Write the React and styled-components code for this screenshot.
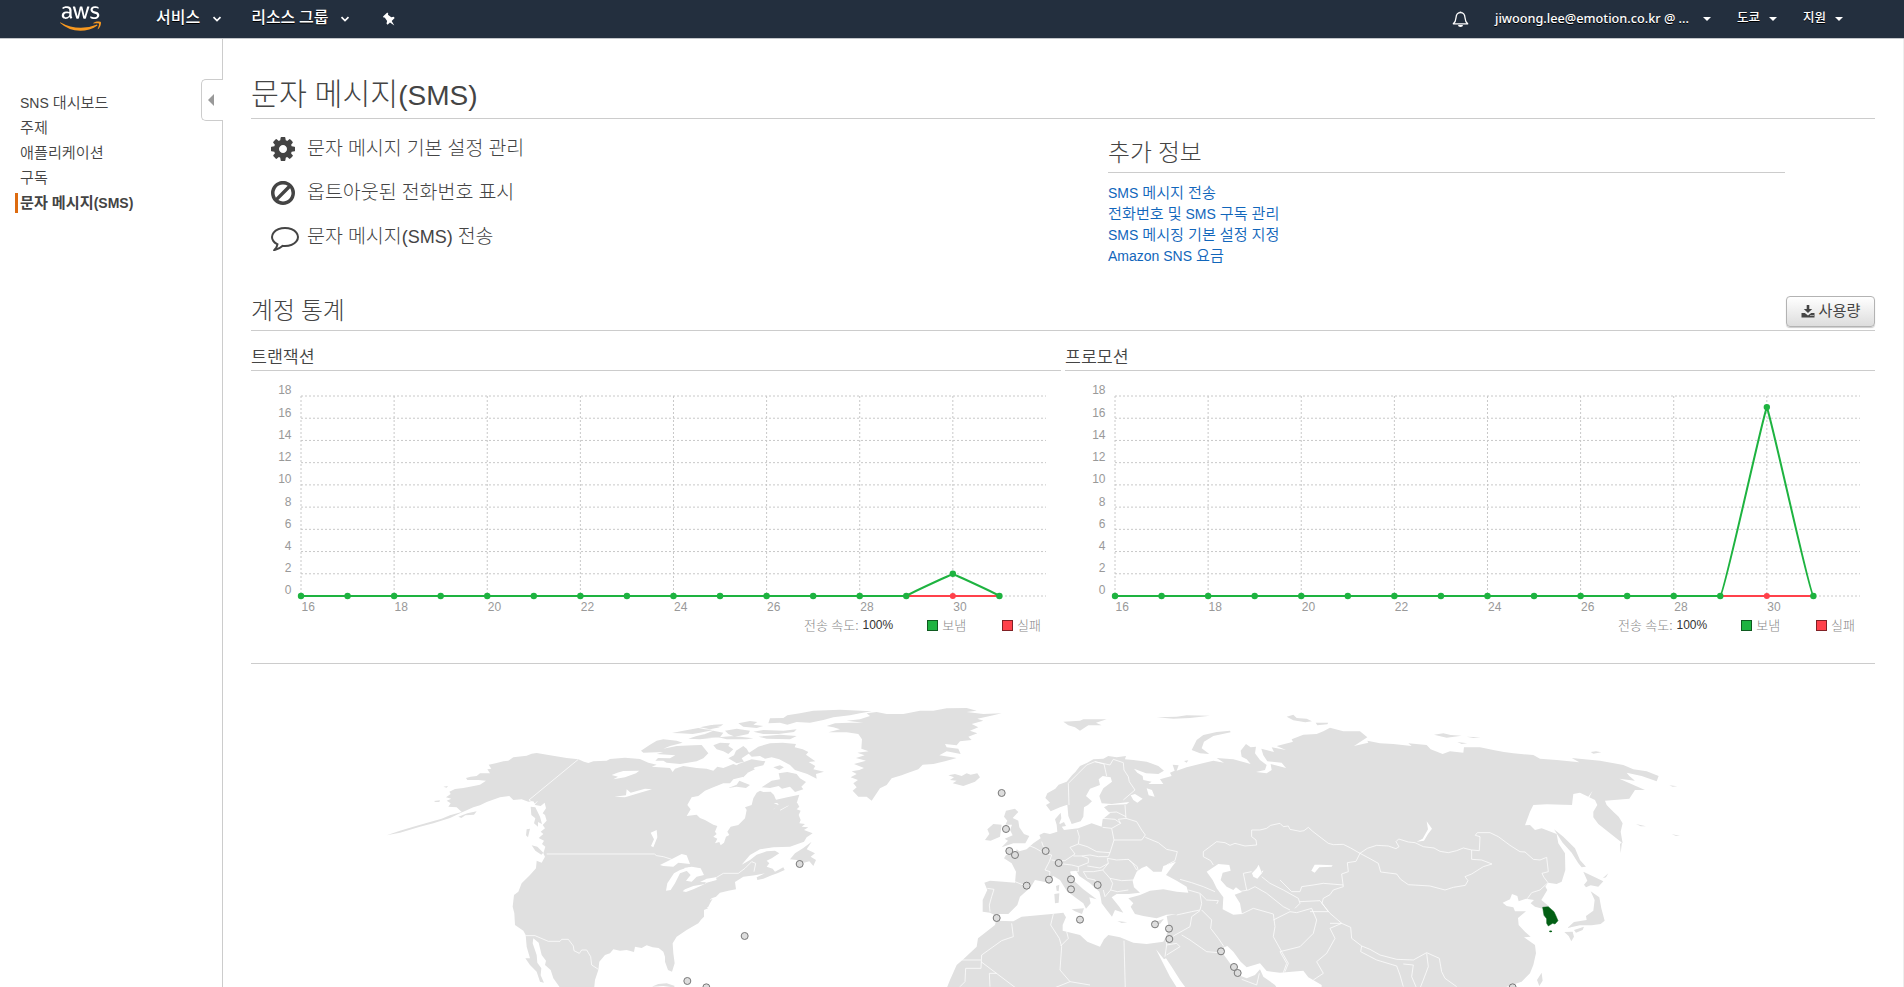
import React from "react";
import styled, { createGlobalStyle } from "styled-components";
import { FaAws } from "react-icons/fa";

const GlobalStyle = createGlobalStyle`
  *, *::before { box-sizing: border-box; }
  html, body { margin: 0; padding: 0; background: #fff; overflow: hidden; }
  body {
    font-family: "Liberation Sans", "Noto Sans CJK KR", sans-serif;
    color: #444;
    font-size: 14px;
  }
`;

/* ---------- text ---------- */

const Hangul = styled.span`
  font-family: "Noto Sans CJK KR", sans-serif;
  font-size: 1.083em;
  font-weight: ${(p) => p.$weight || "inherit"};
  line-height: 1;
`;

function Label({ children, weight = 350 }) {
  return (
    <span>
      {children
        .split(/([\uac00-\ud7a3]+)/)
        .filter(Boolean)
        .map((part, i) =>
          /[\uac00-\ud7a3]/.test(part) ? (
            <Hangul key={i} $weight={weight}>
              {part}
            </Hangul>
          ) : (
            part
          )
        )}
    </span>
  );
}

/* ---------- shell ---------- */

const Page = styled.div`
  width: 1904px;
  height: 987px;
  display: flex;
  flex-direction: column;
  overflow: hidden;
`;

const TopBar = styled.header`
  height: 39px;
  flex: none;
  background: #232f3e;
  border-bottom: 1px solid #c3c6ca;
  display: flex;
  align-items: center;
  justify-content: space-between;
  color: #fff;
  text-shadow: 0 1px 0 #000;
`;

const NavGroup = styled.nav`
  display: flex;
  align-items: center;
  height: 38px;
  padding: ${(p) => (p.$end ? "0 61px 0 0" : "0 0 0 60px")};
`;

const Logo = styled.div`
  width: 41px;
  height: 33px;
  margin-right: 55px;
  display: flex;
  align-items: center;
  padding-bottom: 1px;
  > svg { width: 41px; height: 33px; display: block; }
`;

const NavItem = styled.div`
  display: flex;
  align-items: center;
  font-family: "Noto Sans CJK KR", sans-serif;
  font-size: 16px;
  font-weight: 500;
  line-height: 20px;
  white-space: nowrap;
  margin-right: ${(p) => p.$gap}px;
  padding-bottom: 6px;
  > svg { margin: 7px 0 0 ${(p) => p.$inner}px; }
`;

const AccountItem = styled.div`
  display: flex;
  align-items: center;
  font-family: "Noto Sans", "Noto Sans CJK KR", sans-serif;
  font-size: ${(p) => p.$size || 12}px;
  font-weight: 500;
  line-height: 16px;
  white-space: nowrap;
  margin-left: ${(p) => p.$gap}px;
  padding-bottom: 2px;
`;

const Caret = styled.i`
  width: 0;
  height: 0;
  margin: 2px 0 0 ${(p) => p.$gap}px;
  border: 4px solid transparent;
  border-top-color: #fff;
  border-bottom: 0;
`;

const Body = styled.div`
  display: flex;
  flex: 1;
  min-height: 0;
  border-right: 1px solid #eee;
`;

const Sidebar = styled.aside`
  position: relative;
  width: 223px;
  flex: none;
  border-right: 1px solid #ccc;
  padding: 52px 0 0 15px;
`;

const SideLink = styled.div`
  height: 25px;
  display: flex;
  align-items: center;
  padding-bottom: 1px;
  color: #444;
`;

const SideInner = styled.div`
  height: 20px;
  line-height: 20px;
  padding-left: 2px;
  border-left: 3px solid ${(p) => (p.$active ? "#dd6b10" : "transparent")};
  font-weight: ${(p) => (p.$active ? 700 : 400)};
  white-space: nowrap;
`;

const Collapse = styled.button`
  position: absolute;
  top: 40px;
  right: -1px;
  width: 22px;
  height: 42px;
  padding: 0 0 0 6px;
  background: #fff;
  border: 1px solid #ccc;
  border-right: 0;
  border-radius: 5px 0 0 5px;
  display: flex;
  align-items: center;
  &::before {
    content: "";
    border: 6px solid transparent;
    border-right-color: #999;
    border-left: 0;
  }
`;

const Main = styled.main`
  flex: 1;
  padding: 0 28px;
  min-width: 0;
`;

const Title = styled.h1`
  margin: 0;
  height: 80px;
  padding-top: 38px;
  line-height: 36px;
  border-bottom: 1px solid #ccc;
  font-size: 28px;
  font-weight: 400;
`;

const Intro = styled.section`
  display: flex;
  justify-content: space-between;
  height: 167px;
  padding: 8px 90px 0 20px;
`;

const Actions = styled.div`
  display: flex;
  flex-direction: column;
`;

const Action = styled.div`
  display: flex;
  align-items: center;
  height: 44px;
  font-size: 18px;
  svg { display: block; fill: #444; }
`;

const ActionIcon = styled.span`
  width: 36px;
  padding-bottom: 1px;
`;

const ActionText = styled.span`
  line-height: 24px;
`;

const More = styled.div`
  width: 677px;
  padding-top: 11px;
`;

const MoreTitle = styled.h2`
  margin: 0 0 10px;
  height: 35px;
  padding-top: 1px;
  line-height: 28px;
  border-bottom: 1px solid #ccc;
  font-size: 22px;
  font-weight: 400;
`;

const MoreLink = styled.a`
  display: block;
  height: 21px;
  line-height: 21px;
  color: #1166bb;
`;

const StatsHead = styled.div`
  height: 45px;
  border-bottom: 1px solid #ccc;
  display: flex;
  justify-content: space-between;
`;

const StatsTitle = styled.h2`
  margin: 0;
  padding-top: 11px;
  font-size: 22px;
  line-height: 30px;
  font-weight: 400;
`;

const UsageButton = styled.button`
  margin-top: 10px;
  width: 89px;
  height: 31px;
  display: flex;
  align-items: center;
  justify-content: center;
  gap: 4px;
  padding: 0 0 3px;
  border: 1px solid #b3b3b3;
  border-radius: 4px;
  background: linear-gradient(#fff, #ddd);
  box-shadow: 0 1px 1px rgba(0, 0, 0, 0.2);
  color: #444;
  font: 500 14px "Liberation Sans", "Noto Sans CJK KR", sans-serif;
  svg { display: block; margin-top: 2px; }
`;

const Charts = styled.div`
  display: flex;
  gap: 4px;
  height: 332px;
`;

const Panel = styled.section`
  width: 810px;
`;

const PanelTitle = styled.h3`
  margin: 0;
  height: 40px;
  padding-top: 15px;
  line-height: 24px;
  font-size: 16px;
  font-weight: 400;
  border-bottom: 1px solid #ccc;
`;

const Plot = styled.svg`
  display: block;
  text { font-family: "Liberation Sans", sans-serif; font-size: 12px; fill: #999; }
`;

const Legend = styled.div`
  display: flex;
  justify-content: flex-end;
  align-items: center;
  height: 18px;
  padding-right: 20px;
  font-size: 12px;
  color: #888;
  b { font-weight: 400; color: #333; margin-left: 4px; }
`;

const Key = styled.span`
  display: flex;
  align-items: center;
  margin-left: ${(p) => p.$gap}px;
  &::before {
    content: "";
    width: 11px;
    height: 11px;
    margin: 0 4px 0 0;
    background: ${(p) => p.$fill};
    border: 1px solid ${(p) => p.$edge};
  }
`;

const MapFrame = styled.div`
  border-top: 1px solid #ccc;
  svg { display: block; }
`;

/* ---------- icons ---------- */

const Chevron = () => (
  <svg width="10" height="7" viewBox="0 0 10 7">
    <path d="M1.500 1.200 5 4.600 8.500 1.200" fill="none" stroke="#fff" strokeWidth="1.700" />
  </svg>
);

const Pin = () => (
  <svg width="14" height="15" viewBox="0 0 14 15">
    <path d="M1 4.600 5.300.6l1 1.200-.4 1L9.300 5.300l2.300-.5 1.100 1.200-3 3 2.600 4.600-4.300-3.200-2.500 2.300-1-1.100.6-2.500L2.700 5.400l-.9.3z" fill="#fff" />
  </svg>
);

const Bell = () => (
  <svg width="17" height="18" viewBox="0 0 17 18">
    <path d="M1.300 13.800c2-1.500 2.500-3 2.700-6C4.200 4.500 5.700 2.700 8.500 2.700s4.300 1.800 4.500 5.100c.2 3 .7 4.500 2.700 6z" fill="none" stroke="#fff" strokeWidth="1.300" strokeLinejoin="round" />
    <path d="M7.300 2.600a1.200 1.200 0 0 1 2.400 0M6 15h5a2.500 2 0 0 1-5 0z" fill="#fff" />
  </svg>
);

const Gear = () => (
  <svg width="24" height="24" viewBox="0 128 1536 1536">
    <path d="M1024 896q0-106-75-181t-181-75-181 75-75 181 75 181 181 75 181-75 75-181zm512-109v222q0 12-8 23t-20 13l-185 28q-19 54-39 91 35 50 107 138 10 12 10 25t-9 23q-27 37-99 108t-94 71q-12 0-26-9l-138-108q-44 23-91 38-16 136-29 186-7 28-36 28h-222q-14 0-24.500-8.500t-11.500-21.500l-28-184q-49-16-90-37l-141 107q-10 9-25 9-14 0-25-11-126-114-165-168-7-10-7-23 0-12 8-23 15-21 51-66.500t54-70.500q-27-50-41-99l-183-27q-13-2-21-12.500t-8-23.500v-222q0-12 8-23t19-13l186-28q14-46 39-92-40-57-107-138-10-12-10-24 0-10 9-23 26-36 98.500-107.500t94.500-71.500q13 0 26 10l138 107q44-23 91-38 16-136 29-186 7-28 36-28h222q14 0 24.500 8.500t11.500 21.500l28 184q49 16 90 37l142-107q9-9 24-9 13 0 25 10 129 119 165 170 7 8 7 22 0 12-8 23-15 21-51 66.500t-54 70.500q26 50 41 98l183 28q13 2 21 12.500t8 23.500z" />
  </svg>
);

const Ban = () => (
  <svg width="24" height="24" viewBox="0 128 1536 1536">
    <path d="M1312 893q0-161-87-295l-754 753q137 89 297 89 111 0 211.500-43.500t173.500-116.500 116-174.500 43-212.500zm-999 299l755-754q-135-91-300-91-148 0-273 73t-198 199-73 274q0 162 89 299zm1223-299q0 157-61 300t-163.500 246-245 164-298.500 61-298.500-61-245-164-163.500-246-61-300 61-299.500 163.500-245.500 245-164 298.500-61 298.500 61 245 164 163.500 245.500 61 299.500z" />
  </svg>
);

const Comment = () => (
  <svg width="28" height="28" viewBox="0 0 1792 1792">
    <path d="M896 384q-204 0-381.500 69.500t-282 187.500-104.500 255q0 112 71.500 213.500t201.500 175.500l87 50-27 96q-24 91-70 172 152-63 275-171l43-38 57 6q69 8 130 8 204 0 381.500-69.500t282-187.500 104.500-255-104.500-255-282-187.500-381.500-69.500zm896 512q0 174-120 321.500t-326 233-450 85.500q-70 0-145-8-198 175-460 242-49 14-114 22h-5q-15 0-27-10.500t-16-27.500v-1q-3-4-.5-12t2-10 4.500-9.500l6-9 7-8.500 8-9q7-8 31-34.500t34.500-38 31-39.500 32.500-51 27-59 26-76q-157-89-247.500-220t-90.500-281q0-174 120-321.500t326-233 450-85.500 450 85.500 326 233 120 321.500z" />
  </svg>
);

const Download = () => (
  <svg width="14" height="13" viewBox="0 0 14 13">
    <path d="M5.700 0h2.600v4h2.900L7 8 2.800 4h2.900zM.5 8h3.300L7 10.600 10.200 8h3.300v4.500H.5z" fill="#444" />
    <path d="M9.500 10.500h1M11.500 10.500h1" stroke="#fff" />
  </svg>
);

/* ---------- charts ---------- */

const GREEN = "#1eb340";
const RED = "#ff414b";
const LEFT = 50;
const BASE = 225;
const DAY = 46.56;
const UNIT = 200 / 18;

function LineChart({ peak }) {
  const x = (d) => LEFT + (d - 16) * DAY;
  const y = (v) => BASE - v * UNIT;
  const days = Array.from({ length: 16 }, (_, i) => 16 + i);
  const top = y(peak);
  const sway = peak > 5 ? 2 : 0;
  const line =
    `M${x(16)} ${BASE}H${x(29)}` +
    `C${x(29) + 2 + sway} ${BASE - 2} ${x(30) - 4 - sway} ${top + (BASE - top) * 0.09} ${x(30)} ${top}` +
    `C${x(30) + 4 + sway} ${top + (BASE - top) * 0.09} ${x(31) - 2 - sway} ${BASE - 2} ${x(31)} ${BASE}`;
  return (
    <Plot width="810" height="245" viewBox="0 0 810 245">
      <g stroke="#c8c8c8" strokeDasharray="2 2">
        {Array.from({ length: 10 }, (_, i) => (
          <path key={i} d={`M${LEFT} ${y(i * 2)}H${LEFT + 745}`} />
        ))}
        {Array.from({ length: 8 }, (_, i) => (
          <path key={i} d={`M${x(16 + i * 2)} ${BASE - 200}V${BASE}`} />
        ))}
      </g>
      {Array.from({ length: 10 }, (_, i) => (
        <text key={i} x="40.500" y={y(i * 2) - 1.6} textAnchor="end">
          {i * 2}
        </text>
      ))}
      {Array.from({ length: 8 }, (_, i) => (
        <text key={i} x={x(16 + i * 2) + 0.5} y={BASE + 15}>
          {16 + i * 2}
        </text>
      ))}
      <path d={`M${x(16)} ${BASE}H${x(31)}`} stroke={RED} strokeWidth="2" />
      <circle cx={x(30)} cy={BASE} r="3" fill={RED} />
      <path d={line} fill="none" stroke={GREEN} strokeWidth="2" />
      {days.map((d) => (
        <circle key={d} cx={x(d)} cy={d === 30 ? top : BASE} r="3.200" fill={GREEN} />
      ))}
    </Plot>
  );
}

function StatPanel({ title, peak }) {
  return (
    <Panel>
      <PanelTitle>
        <Label>{title}</Label>
      </PanelTitle>
      <LineChart peak={peak} />
      <Legend>
        <Label weight={300}>전송 속도:</Label>
        <b>100%</b>
        <Key $gap={34} $fill={GREEN} $edge="#0f5a20">
          <Label weight={300}>보냄</Label>
        </Key>
        <Key $gap={36} $fill={RED} $edge="#802126">
          <Label weight={300}>실패</Label>
        </Key>
      </Legend>
    </Panel>
  );
}

/* ---------- world map ---------- */

/* Coordinates are thirds of a pixel; each sheet starts at its own longitude. */
const SHEET = { a: 0, b: 960, c: 1860, d: 2700 };

function outline(...runs) {
  const pts = [];
  runs.forEach((run) => {
    const [sheet, ...pairs] = run.trim().split(/\s+/);
    pairs.forEach((p) => {
      const [px, py] = p.split(",").map(Number);
      pts.push(`${px + SHEET[sheet]} ${py}`);
    });
  });
  return pts.join("L");
}

const LAND = [
  outline(
    "a 20,436 60,422 100,410 150,396 185,386 210,376 245,366 230,352 205,350 212,340 200,332 214,326 198,322 212,312 208,305 225,297 250,294 270,290 300,284 318,272 295,270 262,270 258,264 272,260 290,258 300,250 330,250 322,238 334,236 326,224 350,219 370,214 385,212 400,202 440,197 455,191 470,189 510,196 560,204 595,208 612,215 625,219 640,214 680,212 690,207 735,203 780,207 805,218 830,224 815,230 870,234 878,246 885,236 910,228 950,234 980,236 1000,242 1012,230 1030,234 1060,222 1085,232 1110,228 1125,238 1100,250 1085,262 1060,268 1050,280 1030,280 1000,292 975,302 955,318 935,322 922,345 932,358 920,378 950,374 960,384 975,390 1000,404 1012,408 1005,425 1010,432 1000,440 1012,446 1005,460 1018,456 1022,466 1032,458 1038,440 1048,435 1042,425 1052,410 1075,405 1095,385 1100,360 1095,352 1115,345 1120,325 1130,308",
    "b 180,302 190,306 212,305 222,315 228,330 240,332 222,340 235,345 220,358 245,350 240,362 270,345 290,335 298,350 290,358 302,362 296,375 302,390 298,400 315,402 305,410 325,412 312,420 338,430 320,442 312,455 270,470 220,472 180,478 150,495 125,524 150,510 170,494 200,484 225,482 238,490 215,505 200,512 208,520 200,530 218,536 225,545 250,532 254,540 232,550 215,556 190,566 172,570 170,562 195,550 165,556 130,560 105,576 108,598 85,602 60,608 48,620 35,625 20,640 24,655 12,660 12,680 0,692",
    "a 962,680 968,660 972,640 998,626 990,640 985,650 972,660 970,680 955,700 920,720 890,740 878,760 880,790 884,820 876,845 864,840 855,815 855,800 850,785 836,774 818,772 800,766 785,774 765,770 762,786 740,780 720,782 700,778 690,790 675,795 658,815 655,840 645,870 642,900 545,900 520,865 512,840 495,825 498,812 485,795 476,758 460,745 458,760 470,795 472,818 484,835 482,856 492,878 480,875 470,845 450,825 436,805 450,805 440,770 437,735 430,722 405,705 403,670 398,650 402,615 415,605 425,580 450,555 468,535 470,512 485,518 495,500 490,490 496,470 486,462 492,452 476,444 490,432 482,425 495,415 488,405 500,392 495,375 488,370 498,355 494,338 482,348 466,345 460,334 445,335 425,328 400,330 388,318 360,322 320,336 300,346 280,352 240,370 210,384 160,400 120,410 60,428"
  ),
  outline("a 455,466 472,470 490,488 484,494 466,482"),
  outline("a 452,350 466,352 480,380 486,402 474,396 474,410 462,400 466,385 454,375"),
  outline("a 440,418 450,416 444,442 438,436"),
  outline("a 235,380 262,370 290,364 282,374 256,376 244,384"),
  outline("a 162,333 180,331 178,336 166,336"),
  outline("a 190,290 204,288 200,293"),
  outline("a 783,182 810,164 830,152 850,148 890,152 908,158 870,168 850,176 890,168 940,166 965,165 985,190 970,205 950,214 900,222 860,218 850,212 826,212 834,204 870,205 886,196 830,192 850,186 790,188"),
  outline("a 876,129 910,122 955,114 975,118 1000,120 960,128 938,132 900,130"),
  outline("a 980,112 1000,104 1030,103 1022,109 995,114"),
  outline("a 925,146 950,138 985,130 1005,126 1010,138 995,144 960,148"),
  outline("a 1015,142 1060,138 1080,140 1120,145 1100,148 1040,148"),
  outline("a 1000,166 1020,158 1050,160 1045,168 1060,178 1045,192 1030,184 1010,178"),
  outline("a 1068,182 1090,168 1100,176 1108,190 1085,205 1092,215 1070,220 1045,205 1062,196"),
  outline("b 300,70 340,62 420,59 515,64 480,70 450,76 400,82 370,90 330,98 290,96 262,104 240,98 205,100 210,85 250,84 262,76"),
  outline("b 160,125 190,120 250,122 290,118 282,126 235,132 190,132"),
  outline("b 175,140 240,134 290,138 270,148 200,146"),
  outline("b 115,100 150,93 172,96 160,104 190,108 170,114 130,110"),
  outline("b 75,122 110,116 150,122 145,132 105,140 85,132"),
  outline("b 15,132 40,122 70,128 60,142 20,144"),
  outline("b 0,112 30,106 60,112 30,118"),
  outline("b 145,190 175,170 210,160 248,158 288,162 284,172 308,178 325,186 318,194 346,214 326,216 346,228 340,238 372,245 348,252 350,266 322,252 285,240 270,225 238,208 215,202 195,206 180,198 155,200"),
  outline("b 185,292 215,272 240,268 236,250 262,246 290,252 300,265 318,276 304,290 310,298 285,306 270,290 246,296 236,288 210,294"),
  outline("b 85,294 110,284 118,272 150,285 138,294 110,290"),
  outline("b 90,262 105,252 90,246 98,236 115,222 155,208 196,214 190,226 165,232 152,240 130,262 110,256"),
  outline("b 220,232 240,226 252,232 238,240"),
  outline("b 225,330 262,322 298,314 290,340 262,348 240,360 222,356 236,344"),
  outline("b 270,508 285,490 310,474 335,455 320,478 345,490 332,500 348,510 340,528 328,514 312,518 290,510"),
  outline("a 815,890 835,882 860,880 885,888 880,892 850,888"),
  outline("b 380,108 405,100 450,98 490,98 440,92 480,88 510,78 500,70 530,66 560,72 610,72 660,62 700,62 740,55 800,54 830,62 800,66 850,72 905,70 870,78 832,86 850,92 815,102 835,112 810,122 832,130 805,140 815,150 780,154 770,166 735,162 740,172 775,176 782,192 740,184 718,196 770,204 735,214 700,222 668,224 655,238 625,248 605,256 575,265 560,285 540,295 530,310 515,332 500,320 475,320 458,302 470,292 460,280 474,270 452,262 470,252 455,244 478,240 492,234 462,222 498,212 468,204 494,196 472,188 506,184 484,176 486,148 475,132 440,127 385,127 420,118 400,112"),
  outline("b 745,256 762,262 750,270 770,272 758,280 790,288 825,275 840,262 832,250 812,254 800,250 785,258 765,252"),
  outline("b 918,362 945,356 955,366 938,384 955,392 958,412 972,432 988,438 976,460 940,460 905,472 924,452 914,446 938,436 930,420 936,404 916,404 922,392 912,380"),
  outline("b 855,450 868,432 862,418 880,402 905,404 900,440 872,452"),
  outline(
    "b 848,665 848,630 862,600 853,578 870,572 910,575 945,578 948,545 935,520 912,505 918,495 945,494 950,478 958,484 980,478 1000,460",
    "c 122,445 118,435 132,428 150,432 172,425 170,404 165,388 182,368 184,385 178,400 192,420 235,415 275,400 305,410 308,388 330,370 312,352 325,345 380,343 388,336 335,342 305,340 298,318 310,295 336,275 332,262 308,258 296,268 300,285 270,296 258,318 276,334 264,345 252,352 250,380 242,394 215,402 205,378 202,344 180,352 152,364 138,345 150,338 136,324 142,310 166,296 176,284 200,275 216,256 226,246 240,228 262,218 280,208 310,206 325,198 350,202 378,198 375,208 400,210 440,215 475,228 492,242 475,252 438,250 402,236 412,248 428,258 430,270 455,275 445,282 490,282 480,268 515,258 510,248 524,242 518,224 536,226 530,242 560,232 590,224 640,212 672,218 650,204 700,208 752,222 740,208 725,200 722,182 738,162 752,172 768,170 765,190 780,210 800,225 795,240 768,246 800,250 815,240 812,222 858,234 845,218 802,214 790,196 784,176 822,186 815,172 858,180 830,168 880,155",
    "d 40,158 35,148 70,134 110,132 130,124 150,113 190,124 240,124 262,142 222,168 265,158 262,152 300,160 340,162 395,168 385,160 440,165 452,178 488,192 510,184 550,188 552,172 600,172 640,180 672,186 700,190 760,195 780,206 830,210 898,217 875,204 960,212 1030,225 1060,238 1100,244 1136,258 1130,274 1085,258 1040,248 1048,258 1065,272 1018,266 1095,300 1065,300 1048,326 975,332 980,345 1000,365 1016,380 1028,400 1022,425 1028,460 990,430 955,402 940,382 940,365 952,345 945,330 928,322 938,302 925,320 900,308 880,312 876,345 800,343 760,345 750,365 735,406 750,405 765,420 785,415 830,432 835,460 855,490 856,540 845,575 830,582 804,578 796,590 802,600 784,630 806,648 788,656 765,650 752,640 762,630 738,626 716,634 712,618 696,612 690,628 668,638 680,648 700,652 705,664 738,664 714,684 716,705 735,725 752,740 732,742 765,765 768,790 760,825 750,850 725,875 680,890 676,900 125,900 125,885 85,862 70,842 0,848",
    "c 800,843 780,820 740,832 722,815 700,785 682,768 672,772 665,785 690,820 715,855 740,865 765,855 780,838 790,860 825,885 835,900 562,900 540,870 515,830 498,805 492,808 468,778 492,825 510,860 532,895 535,900",
    "b 738,900 750,870 770,825 790,808 830,770 834,745 885,705 888,692 940,694 965,680 1055,672 1090,668 1098,682",
    "c 188,705 188,722 240,735 262,755 300,770 312,748 325,735 360,742 400,758 440,762 490,755 500,735 505,705 500,678 530,672 500,674 470,685 430,678 405,672 392,650 400,640 385,625 420,615 450,602 490,598 530,605 565,608 560,590 530,572 498,555 520,525 528,515 490,528 485,545 460,545 440,528 425,534 410,545 398,572 402,592 420,608 385,612 350,612 335,622 358,650 370,668 345,660 336,680 320,660 305,640 302,622 298,605 270,580 238,558 228,542 210,545 222,572 250,598 290,628 268,622 272,640 258,656 250,640 225,622 200,602 180,570 160,558 135,576 105,570 92,592 60,620 52,645 25,672 0,672",
    "b 885,676 870,668"
  ),
  outline("c 180,402 192,396 198,408 185,410"),
  outline("c 215,658 252,655 246,672 225,664"),
  outline("c 163,612 178,610 176,638 165,640"),
  outline("c 168,588 178,584 176,604 170,602"),
  outline("c 352,693 382,697 365,699"),
  outline("c 462,702 472,694 492,686 480,702"),
  outline("c 190,95 240,92 250,88 320,88 288,98 305,106 265,106 240,122 225,112 205,106"),
  outline("c 575,180 590,150 610,135 650,126 690,122 692,127 640,138 612,155 605,175 628,192 600,190"),
  outline("c 470,82 530,80 560,76 630,77 570,84 520,86"),
  outline("d 20,80 40,74 50,84 80,86 96,94 76,97 40,91"),
  outline("d 107,98 145,98 142,103 112,106"),
  outline("d 462,134 490,130 512,135 545,137 500,143"),
  outline("d 560,140 602,142 580,144"),
  outline("d 532,156 562,160 545,162"),
  outline("d 932,186 948,184 964,187 940,191"),
  outline("c 552,213 565,211 560,218"),
  outline("d 822,418 850,440 885,475 900,510 918,530 905,532 895,520 875,488 848,458"),
  outline("d 910,545 945,562 970,574 955,590 932,586 918,592 912,584 922,572"),
  outline("d 932,604 958,622 964,655 974,692 962,702 935,706 900,706 862,714 882,696 920,690 918,678 940,662 944,630"),
  outline("d 853,726 878,725 882,740 874,754 866,738"),
  outline("d 882,720 912,710 908,720 888,728"),
  outline("d 785,848 788,872 778,888 771,870"),
  outline("d 1168,286 1192,289 1178,290"),
  outline("d 1068,402 1098,409 1082,409"),
  outline("d 1175,432 1200,438 1188,438"),
  outline("d 968,565 985,550 978,562"),
  outline("d 1020,462 1026,456 1022,490"),
];

const WATER = [
  outline("a 695,255 712,248 730,243 778,242 768,250 735,262 700,268 714,260"),
  outline("a 703,320 738,316 740,298 752,308 795,296 816,298 780,308 735,322"),
  outline("a 812,428 830,420 832,442 820,472 813,468 822,448"),
  outline("a 840,525 870,510 905,492 920,496 930,522 895,518 880,530 850,528"),
  outline("a 858,602 862,580 882,550 900,540 925,532 928,540 900,550 885,580 872,600"),
  outline("a 912,534 935,530 962,535 972,555 950,560 935,575 918,572 932,555"),
  outline("a 908,604 915,598 940,588 975,582 940,598 918,606"),
  outline("a 960,576 980,566 1008,562 1010,570 985,577"),
  outline("c 620,545 655,522 688,525 692,542 668,548 662,570 680,590 700,600 708,592 726,606 704,614 720,640 726,672 700,674 668,658 670,622 650,595 638,570"),
  outline("c 756,550 770,535 776,524 786,550 772,566 760,560"),
  outline("c 392,316 405,312 428,326 412,338 400,330"),
  outline("c 440,295 456,300 464,320 446,316"),
  outline("c 785,545 790,540 788,548"),
  outline("d 440,394 456,416 444,432 432,452 410,455 428,446 444,418"),
  outline("d 94,542 104,524 122,524 158,526 155,530 118,532 104,548"),
];

const BORDERS = [
  outline("a 595,208 447,330 465,342 472,334"),
  outline("a 500,492 823,492 830,497 850,500 875,508"),
  outline("a 975,580 1010,562 1030,550 1075,550 1095,535 1115,515 1127,520 1122,545"),
  outline("a 437,737 465,737 505,754 540,754 545,748 565,748 580,768 582,782 598,790 605,780 620,780 632,800 635,825 655,838"),
  outline("b 862,595 882,598 875,620 868,645 870,665"),
  outline("b 945,575 970,585 995,588"),
  outline("c 85,466 105,474 130,488 155,495 148,515 135,540 150,545 148,562"),
  outline("c 125,455 130,470 142,475 138,488"),
  outline("c 232,420 238,440 235,462 210,472 225,492 195,512 170,512 155,510"),
  outline("c 235,462 262,470 290,485 330,488 325,500 295,500 270,495 245,498 220,498"),
  outline("c 165,525 190,522 215,525 235,530 265,518 265,505 245,498"),
  outline("c 262,528 300,534 325,520 322,505"),
  outline("c 330,488 342,450 335,415 308,412"),
  outline("c 335,415 362,400 355,388 378,385 410,395 425,420 436,435 425,450 342,450"),
  outline("c 378,385 375,345"),
  outline("c 308,385 345,388 362,400"),
  outline("c 320,368 350,366 378,380"),
  outline("c 436,442 475,458 500,478 532,485 525,512 500,525"),
  outline("c 322,505 350,510 385,508 398,520 410,540"),
  outline("c 385,508 412,530 415,545"),
  outline("c 325,520 308,540 330,565 365,572 400,570"),
  outline("c 330,565 338,580 332,600 352,605 385,600"),
  outline("c 308,540 280,545 250,545 262,565 285,570 295,590"),
  outline("c 235,530 235,545 212,545"),
  outline("c 310,600 315,620 332,600"),
  outline("c 207,345 205,280 235,250 260,225 285,215 312,222 320,258"),
  outline("c 285,215 330,225 340,208 370,218 372,240 385,260 388,275 405,300 370,330"),
  outline("c 540,568 575,578 610,590 645,605"),
  outline("c 565,600 600,610 620,630 655,632 650,642"),
  outline("c 600,612 605,640 600,660 575,665 530,675"),
  outline("c 605,660 635,690 632,715 655,745 672,770"),
  outline("c 600,662 575,680 570,710 520,738 510,748"),
  outline("c 545,735 570,750 620,785 655,788"),
  outline("c 498,752 500,765 495,800"),
  outline("c 500,765 530,760 540,770 500,795"),
  outline("c 640,525 632,512 610,500 610,485 630,470 650,455 675,458 690,466 705,460 735,468 770,465 768,450 755,440 755,420 780,420 800,415 812,406 840,400 850,410 865,408",
    "d 30,418 60,424 72,422 85,412 98,424 145,460 160,464 190,463 212,474 240,490"),
  outline("c 740,600 730,550 755,545"),
  outline("c 715,605 745,600 765,590 800,610 850,650 870,660"),
  outline("c 785,560 810,580 850,600 895,625", "d 60,640 45,655"),
  outline("c 725,672 760,655 820,672 825,710 820,740 845,785 865,820 855,845"),
  outline("c 820,690 870,665", "d 50,668 95,655 110,690 100,730 60,770 0,785"),
  outline("d 0,570 35,605 60,605 65,590 100,585 130,580 190,585"),
  outline("d 60,635 120,632 145,665 90,665"),
  outline("d 240,490 228,514 202,518 205,545 185,552 190,590 160,600 150,614 130,625 126,640 150,670 185,700 212,712 215,745 245,768 270,778 300,795 350,808"),
  outline("d 150,700 185,700 150,715 165,745 140,790 110,815 130,850 100,870"),
  outline("d 245,768 242,785 290,810 350,828"),
  outline("d 350,808 400,810 440,788 478,805 485,845 495,865 530,890"),
  outline("d 350,828 360,855 370,890"),
  outline("d 370,822 400,825 395,860 410,895"),
  outline("d 440,790 445,830 430,870 420,895"),
  outline("d 240,490 262,475 290,466 325,468 348,476 357,470 348,455 356,447 385,456 405,458 430,470 462,474 480,484 505,488 530,482 550,474 575,480 598,482 600,440 586,436 592,428 630,428 655,440 690,466 720,485 735,486 760,508 780,510 800,502 805,545 786,550 792,562 804,578"),
  outline("d 240,490 270,506 295,520 302,546 350,552 362,568 385,584 450,588 495,600 520,592 556,586 564,572 555,560 575,552 610,530 636,522 605,510 575,508 575,480"),
  outline("d 804,578 780,600 755,608 742,626"),
  outline("b 935,700 940,740 905,752 845,795 843,835 797,835 795,875 780,890"),
  outline("b 785,810 843,810"),
  outline("b 843,815 945,892"),
  outline("b 890,850 868,850 870,890"),
  outline("b 1060,672 1052,705 1078,745 1085,770 1080,840 1110,875 1060,895"),
  outline("c 200,725 205,745 182,768"),
  outline("c 372,752 376,900"),
  outline("c 210,875 270,885"),
  outline("c 725,868 770,885 778,850"),
  outline("d 0,785 20,820 10,848"),
];

const KOREA = outline("d 788,652 805,650 822,665 828,678 834,692 825,702 818,700 805,708 800,700 800,686 792,676");

const ISLES = [
  ["a", 1094, 738], ["a", 922, 873], ["a", 979, 892],
  ["b", 299, 522], ["b", 905, 309], ["b", 918, 417], ["b", 928, 483], ["b", 945, 495],
  ["b", 1037, 483], ["b", 1076, 519], ["b", 1047, 569], ["b", 1113, 568], ["b", 1113, 598],
  ["b", 980, 587], ["b", 890, 684], ["b", 1140, 689],
  ["c", 293, 585], ["c", 465, 703], ["c", 507, 716], ["c", 508, 747],
  ["c", 663, 784], ["c", 702, 831], ["c", 713, 849], ["d", 698, 892],
];

function WorldMap() {
  return (
    <svg width="1624" height="323" viewBox="251 664 1624 323">
      <g transform="translate(380 690) scale(.33333)">
        <path d={LAND.map((p) => `M${p}Z`).join("")} fill="#e0e0e0" />
        <path d={WATER.map((p) => `M${p}Z`).join("")} fill="#fff" />
        <path
          d={BORDERS.map((p) => `M${p}`).join("")}
          fill="none"
          stroke="#fff"
          strokeOpacity=".75"
          strokeWidth="3"
          strokeLinejoin="round"
        />
        <path d={`M${KOREA}Z`} fill="#035f14" stroke="#035f14" strokeWidth="1.500" />
        <ellipse cx={SHEET.d + 812} cy="724" rx="4.500" ry="2.500" fill="#035f14" />
        {ISLES.map(([s, cx, cy], i) => (
          <circle key={i} cx={SHEET[s] + cx} cy={cy} r="10.500" fill="#ddd" stroke="#777" strokeWidth="3" />
        ))}
      </g>
    </svg>
  );
}

/* ---------- page ---------- */

const MENU = ["SNS 대시보드", "주제", "애플리케이션", "구독", "문자 메시지(SMS)"];

const ACTIONS = [
  [Gear, "문자 메시지 기본 설정 관리"],
  [Ban, "옵트아웃된 전화번호 표시"],
  [Comment, "문자 메시지(SMS) 전송"],
];

const LINKS = [
  "SMS 메시지 전송",
  "전화번호 및 SMS 구독 관리",
  "SMS 메시징 기본 설정 지정",
  "Amazon SNS 요금",
];

export default function App() {
  return (
    <Page>
      <GlobalStyle />
      <TopBar>
        <NavGroup>
          <Logo>
            <svg viewBox="0 0 640 512">
              <defs>
                <linearGradient id="smile" gradientUnits="userSpaceOnUse" x1="0" y1="0" x2="0" y2="512">
                  <stop offset=".555" stopColor="#fff" />
                  <stop offset=".555" stopColor="#f7981f" />
                </linearGradient>
              </defs>
              <FaAws width="640" height="512" fill="url(#smile)" style={{ width: 640, height: 512 }} />
            </svg>
          </Logo>
          <NavItem $gap={29} $inner={12}>서비스<Chevron /></NavItem>
          <NavItem $gap={32} $inner={12}>리소스 그룹<Chevron /></NavItem>
          <Pin />
        </NavGroup>
        <NavGroup $end>
          <Bell />
          <AccountItem $gap={26} $size={12.7}>jiwoong.lee@emotion.co.kr @ ...<Caret $gap={14} /></AccountItem>
          <AccountItem $gap={26} $size={12.5}>도쿄<Caret $gap={9} /></AccountItem>
          <AccountItem $gap={26} $size={12.5}>지원<Caret $gap={9} /></AccountItem>
        </NavGroup>
      </TopBar>
      <Body>
        <Sidebar>
          {MENU.map((m, i) => (
            <SideLink key={m}>
              <SideInner $active={i === 4}>
                <Label weight={i === 4 ? 700 : 350}>{m}</Label>
              </SideInner>
            </SideLink>
          ))}
          <Collapse aria-label="collapse" />
        </Sidebar>
        <Main>
          <Title><Label weight={300}>문자 메시지(SMS)</Label></Title>
          <Intro>
            <Actions>
              {ACTIONS.map(([Icon, text]) => (
                <Action key={text}>
                  <ActionIcon><Icon /></ActionIcon>
                  <ActionText><Label weight={300}>{text}</Label></ActionText>
                </Action>
              ))}
            </Actions>
            <More>
              <MoreTitle><Label weight={300}>추가 정보</Label></MoreTitle>
              {LINKS.map((t) => (
                <MoreLink key={t}><Label>{t}</Label></MoreLink>
              ))}
            </More>
          </Intro>
          <StatsHead>
            <StatsTitle><Label weight={300}>계정 통계</Label></StatsTitle>
            <UsageButton><Download /><Label weight={400}>사용량</Label></UsageButton>
          </StatsHead>
          <Charts>
            <StatPanel title="트랜잭션" peak={2} />
            <StatPanel title="프로모션" peak={17} />
          </Charts>
          <MapFrame><WorldMap /></MapFrame>
        </Main>
      </Body>
    </Page>
  );
}
